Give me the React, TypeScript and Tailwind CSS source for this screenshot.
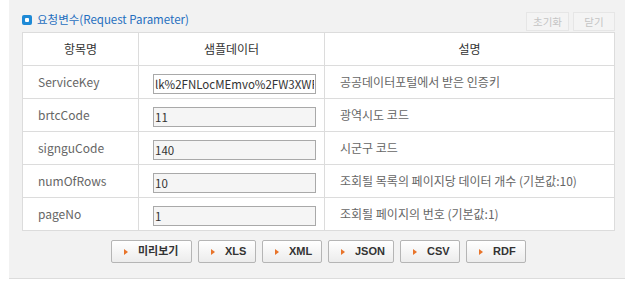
import React from "react";

const FONT = { fontFamily: '"Noto Sans CJK KR", "Noto Sans", sans-serif' };

const ROWS = [
  { name: "ServiceKey", value: "lk%2FNLocMEmvo%2FW3XWFpUq9wGzKx", desc: "공공데이터포털에서 받은 인증키", white: true },
  { name: "brtcCode", value: "11", desc: "광역시도 코드" },
  { name: "signguCode", value: "140", desc: "시군구 코드" },
  { name: "numOfRows", value: "10", desc: "조회될 목록의 페이지당 데이터 개수 (기본값:10)" },
  { name: "pageNo", value: "1", desc: "조회될 페이지의 번호 (기본값:1)" },
];

const BUTTONS = [
  { label: "미리보기", w: "w-[81px]" },
  { label: "XLS", w: "w-[58px]" },
  { label: "XML", w: "w-[60px]" },
  { label: "JSON", w: "w-[66px]" },
  { label: "CSV", w: "w-[60px]" },
  { label: "RDF", w: "w-[60px]" },
];

function ActionButton({ label, w }: { label: string; w: string }) {
  return (
    <button
      className={`${w} h-[23px] flex items-center pl-[12px] gap-[10px] border border-[#b5b5b5] rounded-[2px] bg-gradient-to-b from-white to-[#ececec] text-[11px] font-bold text-[#333]`}
      style={{ fontFamily: '"Liberation Sans", "Noto Sans CJK KR", sans-serif' }}
    >
      <span className="w-0 h-0 border-y-[3px] border-y-transparent border-l-[4px] border-l-[#e8742a]" />
      <span className="leading-none">{label}</span>
    </button>
  );
}

export default function App() {
  return (
    <div className="w-[628px] h-[285px] bg-white pl-[9px] pr-[3px]" style={FONT}>
      <div className="bg-[#f2f2f2] h-[279px] border-b border-[#dcdcdc] pl-[13px] pr-[10px]">
        <div className="h-[32px] flex items-end justify-between">
          <div className="flex items-center gap-[5px] h-[20px] mb-[2px]">
            <span className="w-[10px] h-[10px] rounded-[2px] bg-[#1e8ad6] flex items-center justify-center">
              <span className="w-[4px] h-[4px] bg-white rounded-[1px]" />
            </span>
            <span className="text-[11.5px] text-[#1f6fbf] leading-none">요청변수(Request Parameter)</span>
          </div>
          <div className="flex gap-[4px] mb-[1px]">
            <span className="w-[43px] h-[19px] flex items-center justify-center border border-[#e6e6e6] bg-[#f4f4f4] text-[10.5px] text-[#c4c4c4]">초기화</span>
            <span className="w-[42px] h-[19px] flex items-center justify-center border border-[#e6e6e6] bg-[#f4f4f4] text-[10.5px] text-[#c4c4c4]">닫기</span>
          </div>
        </div>
        <table className="w-[593px] border-collapse bg-white table-fixed">
          <colgroup>
            <col className="w-[116px]" />
            <col className="w-[186px]" />
            <col />
          </colgroup>
          <thead>
            <tr className="h-[33px]">
              <th className="border border-[#dcdcdc] text-[12px] font-normal text-[#333]">항목명</th>
              <th className="border border-[#dcdcdc] text-[12px] font-normal text-[#333]">샘플데이터</th>
              <th className="border border-[#dcdcdc] text-[12px] font-normal text-[#333]">설명</th>
            </tr>
          </thead>
          <tbody>
            {ROWS.map((r) => (
              <tr key={r.name} className="h-[33px]">
                <td className="border border-[#dcdcdc] pl-[15px] text-[12px] text-[#666]">{r.name}</td>
                <td className="border border-[#dcdcdc] pl-[14px]">
                  <input
                    readOnly
                    value={r.value}
                    className={`w-[163px] h-[20px] border border-[#a9a9a9] px-[1px] text-[11.5px] text-[#333] outline-none ${
                      r.white ? "bg-white" : "bg-[#f5f5f5]"
                    }`}
                  />
                </td>
                <td className="border border-[#dcdcdc] pl-[15px] text-[12px] text-[#666] whitespace-nowrap">{r.desc}</td>
              </tr>
            ))}
          </tbody>
        </table>
        <div className="flex justify-center gap-[6px] mt-[9px]">
          {BUTTONS.map((b) => (
            <ActionButton key={b.label} label={b.label} w={b.w} />
          ))}
        </div>
      </div>
    </div>
  );
}
